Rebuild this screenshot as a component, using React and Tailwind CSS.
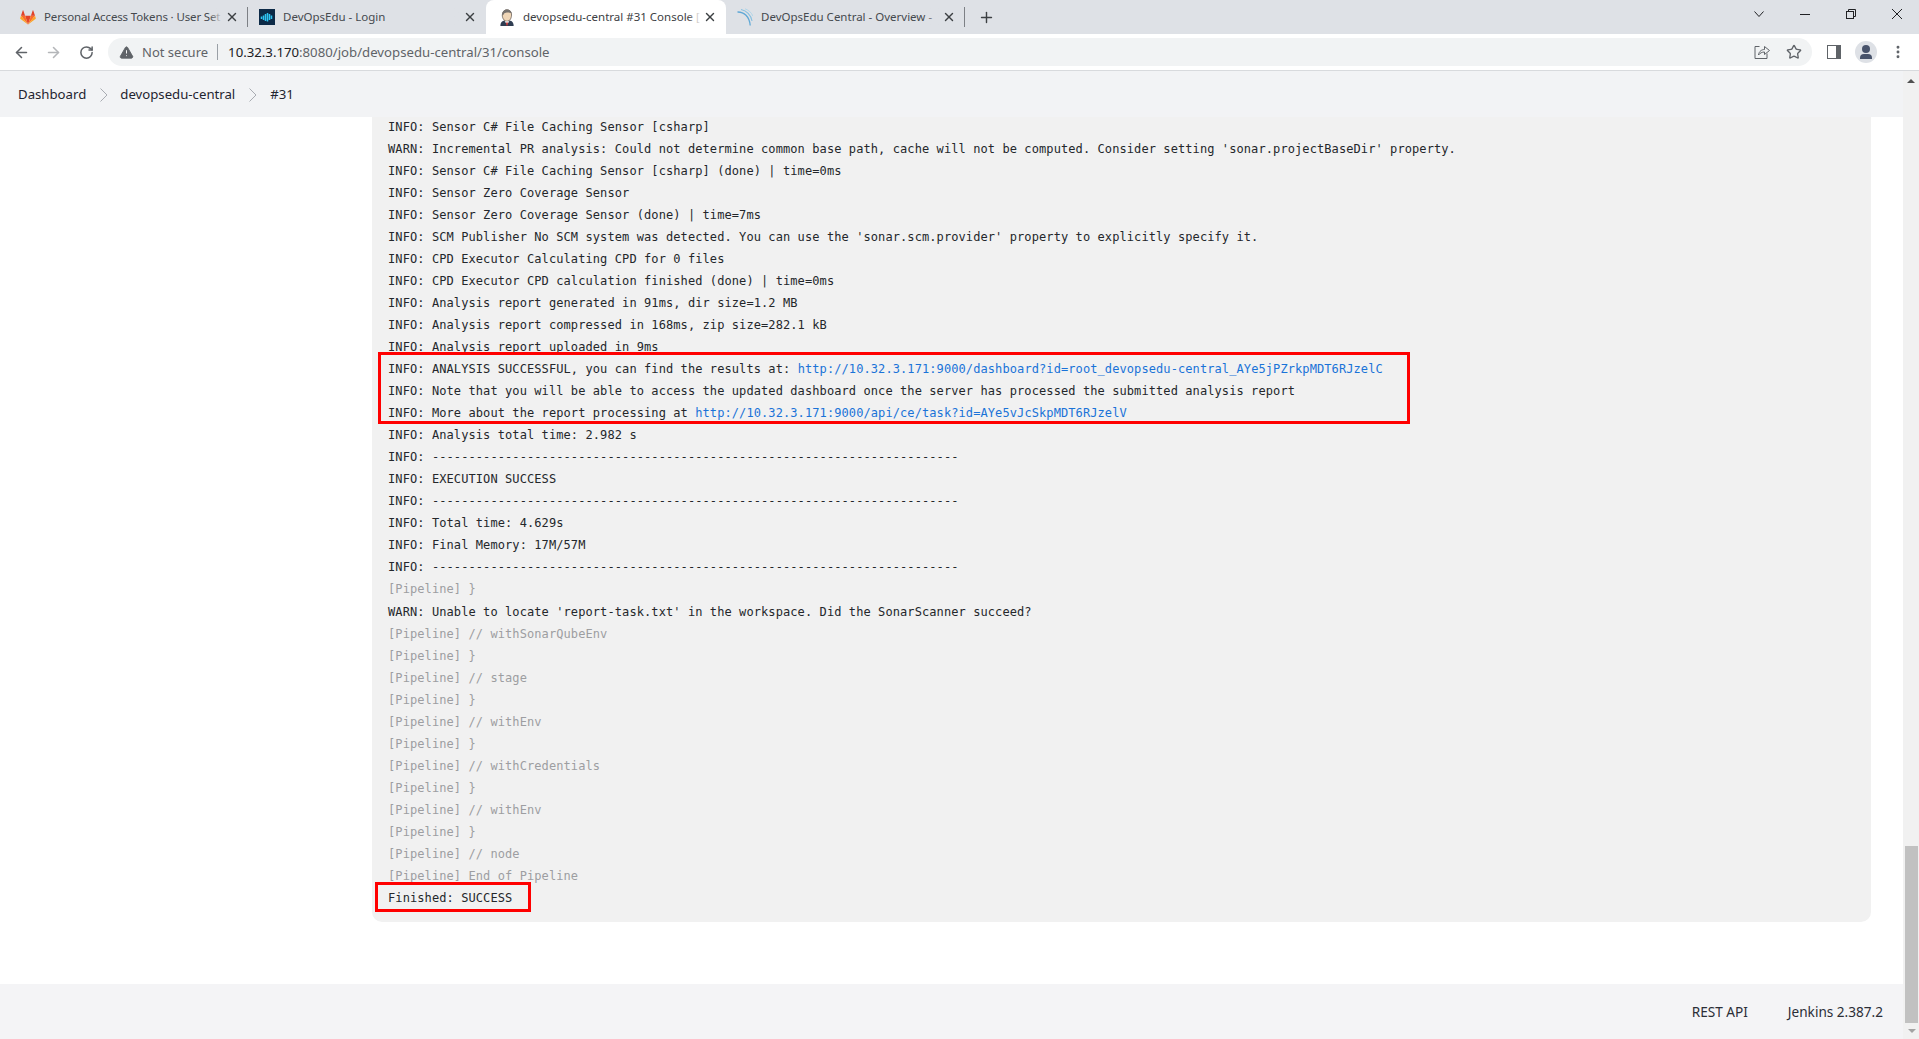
import { ArrowLeft, ArrowRight, RotateCw, X, Plus, Star, TriangleAlert, EllipsisVertical } from 'lucide-react';

const SANS = 'font-["Noto_Sans","Open_Sans",sans-serif]';

const LINES = [
  { t: 'INFO: Sensor C# File Caching Sensor [csharp]' },
  { t: "WARN: Incremental PR analysis: Could not determine common base path, cache will not be computed. Consider setting 'sonar.projectBaseDir' property." },
  { t: 'INFO: Sensor C# File Caching Sensor [csharp] (done) | time=0ms' },
  { t: 'INFO: Sensor Zero Coverage Sensor' },
  { t: 'INFO: Sensor Zero Coverage Sensor (done) | time=7ms' },
  { t: "INFO: SCM Publisher No SCM system was detected. You can use the 'sonar.scm.provider' property to explicitly specify it." },
  { t: 'INFO: CPD Executor Calculating CPD for 0 files' },
  { t: 'INFO: CPD Executor CPD calculation finished (done) | time=0ms' },
  { t: 'INFO: Analysis report generated in 91ms, dir size=1.2 MB' },
  { t: 'INFO: Analysis report compressed in 168ms, zip size=282.1 kB' },
  { t: 'INFO: Analysis report uploaded in 9ms' },
  { t: 'INFO: ANALYSIS SUCCESSFUL, you can find the results at: ', link: 'http://10.32.3.171:9000/dashboard?id=root_devopsedu-central_AYe5jPZrkpMDT6RJzelC' },
  { t: 'INFO: Note that you will be able to access the updated dashboard once the server has processed the submitted analysis report' },
  { t: 'INFO: More about the report processing at ', link: 'http://10.32.3.171:9000/api/ce/task?id=AYe5vJcSkpMDT6RJzelV' },
  { t: 'INFO: Analysis total time: 2.982 s' },
  { t: 'INFO: ------------------------------------------------------------------------' },
  { t: 'INFO: EXECUTION SUCCESS' },
  { t: 'INFO: ------------------------------------------------------------------------' },
  { t: 'INFO: Total time: 4.629s' },
  { t: 'INFO: Final Memory: 17M/57M' },
  { t: 'INFO: ------------------------------------------------------------------------' },
  { t: '[Pipeline] }', dim: true },
  { t: "WARN: Unable to locate 'report-task.txt' in the workspace. Did the SonarScanner succeed?" },
  { t: '[Pipeline] // withSonarQubeEnv', dim: true },
  { t: '[Pipeline] }', dim: true },
  { t: '[Pipeline] // stage', dim: true },
  { t: '[Pipeline] }', dim: true },
  { t: '[Pipeline] // withEnv', dim: true },
  { t: '[Pipeline] }', dim: true },
  { t: '[Pipeline] // withCredentials', dim: true },
  { t: '[Pipeline] }', dim: true },
  { t: '[Pipeline] // withEnv', dim: true },
  { t: '[Pipeline] }', dim: true },
  { t: '[Pipeline] // node', dim: true },
  { t: '[Pipeline] End of Pipeline', dim: true },
  { t: 'Finished: SUCCESS' },
];

function GitlabIcon() {
  return (
    <svg width="16" height="15" viewBox="0 0 17 16" className="shrink-0">
      <path d="M8.5 15.5 L11.6 6 H5.4 Z" fill="#e24329" />
      <path d="M8.5 15.5 L5.4 6 H1 Z" fill="#fc6d26" />
      <path d="M1 6 L0.2 8.7 C0.1 9.1 0.2 9.5 0.6 9.7 L8.5 15.5 Z" fill="#fca326" />
      <path d="M1 6 H5.4 L3.5 0.4 C3.4 0.1 3 0.1 2.9 0.4 Z" fill="#e24329" />
      <path d="M8.5 15.5 L11.6 6 H16 Z" fill="#fc6d26" />
      <path d="M16 6 L16.8 8.7 C16.9 9.1 16.8 9.5 16.4 9.7 L8.5 15.5 Z" fill="#fca326" />
      <path d="M16 6 H11.6 L13.5 0.4 C13.6 0.1 14 0.1 14.1 0.4 Z" fill="#e24329" />
    </svg>
  );
}

function WaveIcon() {
  return (
    <svg width="16" height="16" viewBox="0 0 16 16" className="shrink-0">
      <rect width="16" height="16" fill="#0c2a47" />
      <g stroke="#2fc4f2" strokeWidth="1.5">
        <path d="M2.5 7.5v2.5M4.5 6.5v4.5M6.5 5v7M8.5 4v8.5M10.5 5v6M12.5 6.5v3.5" />
      </g>
    </svg>
  );
}

function JenkinsIcon() {
  return (
    <svg width="16" height="17" viewBox="0 0 16 18" className="shrink-0">
      <path d="M1 18 C1 13.5 3.5 12 8 12 C12.5 12 15 13.5 15 18 Z" fill="#2f3d52" />
      <path d="M3 6.5 C3 2.5 5.5 0.8 8 0.8 C11 0.8 13 3 12.8 6.5 C12.6 10.5 10.6 13 8 13 C5.2 13 3 10 3 6.5 Z" fill="#f0d6b7" stroke="#49403a" strokeWidth="0.7" />
      <path d="M3 7 C2.8 2.4 5.4 0.6 8 0.6 C10.8 0.6 12.6 2 12.8 4.4 C10 3.4 6.8 3.6 5.2 4.6 C4.8 5.4 4.4 6.4 3 7 Z" fill="#77726f" />
      <path d="M5.5 13 H10.5 L9 15.2 H7 Z" fill="#fff" />
      <path d="M7 14.2 H9 L8.6 17.5 H7.4 Z" fill="#d33833" />
    </svg>
  );
}

function SonarIcon() {
  return (
    <svg width="16" height="18" viewBox="0 0 16 18" fill="none" className="shrink-0">
      <path d="M0.5 4 C7 3.8 12.5 8.5 13.2 17.5" stroke="#5fa8d6" strokeWidth="1.3" />
      <path d="M4 1.5 C9.5 2.5 14 7 15 13" stroke="#86bfe0" strokeWidth="1.1" />
      <path d="M8 0.8 C11.5 2 14.5 4.5 15.8 8" stroke="#aed4e8" strokeWidth="0.9" />
    </svg>
  );
}

function Tab({ icon, title, active, width, divider }) {
  return (
    <div className={`relative h-[34px] flex items-center pr-[9px] shrink-0 ${width} ${active ? 'bg-white rounded-t-[8px]' : ''}`}>
      {icon}
      <span className={`relative ml-[8px] flex-1 overflow-hidden whitespace-nowrap text-[11.5px] ${active ? 'text-[#3c4043]' : 'text-[#45494e]'}`}>
        {title}
        <span className={`absolute right-0 top-0 bottom-0 w-[14px] bg-gradient-to-r from-transparent ${active ? 'to-white' : 'to-[#dee1e6]'}`} />
      </span>
      <X size={14} strokeWidth={2.4} className="text-[#3c4043] shrink-0 ml-[2px]" />
      {divider && <div className="absolute right-0 top-[7px] h-[20px] w-px bg-[#7d8085]" />}
    </div>
  );
}

function ChromeBar() {
  return (
    <>
      <div className={`h-[34px] bg-[#dee1e6] flex items-start pl-[8px] ${SANS}`}>
        <Tab icon={<GitlabIcon />} title="Personal Access Tokens · User Set" width="w-[240px] pl-[12px] tracking-[-0.14px]" divider />
        <Tab icon={<WaveIcon />} title="DevOpsEdu - Login" width="w-[238px] pl-[11px]" />
        <Tab icon={<JenkinsIcon />} title="devopsedu-central #31 Console [" width="w-[240px] pl-[13px]" active />
        <Tab icon={<SonarIcon />} title="DevOpsEdu Central - Overview - " width="w-[239px] pl-[11px]" divider />
        <Plus size={17} strokeWidth={2} className="text-[#3c4043] ml-[13px] mt-[9px]" />
        <div className="flex-1" />
        <svg width="10" height="10" viewBox="0 0 10 10" fill="none" stroke="#202124" className="mt-[9px]">
          <path d="M0.5 2.5L5 7.5L9.5 2.5" />
        </svg>
        <svg width="10" height="10" viewBox="0 0 10 10" fill="none" stroke="#202124" className="ml-[36px] mt-[9px]">
          <path d="M0 5.5H10" />
        </svg>
        <svg width="10" height="10" viewBox="0 0 10 10" fill="none" stroke="#202124" className="ml-[36px] mt-[9px]">
          <rect x="0.5" y="2.5" width="7" height="7" />
          <path d="M2.5 2.5V0.5H9.5V7.5H7.5" />
        </svg>
        <svg width="10" height="10" viewBox="0 0 10 10" fill="none" stroke="#202124" className="ml-[36px] mt-[9px] mr-[17px]">
          <path d="M0 0L10 10M10 0L0 10" />
        </svg>
      </div>
      <div className={`h-[37px] bg-white border-b border-[#d8dadd] flex items-center ${SANS}`}>
        <ArrowLeft size={17} strokeWidth={2.2} className="text-[#5f6368] ml-[13px]" />
        <ArrowRight size={17} strokeWidth={2.2} className="text-[#b4b6b9] ml-[15px]" />
        <RotateCw size={15} strokeWidth={2.4} className="text-[#5f6368] ml-[17px]" />
        <div className="ml-[14px] h-[28px] w-[1704px] rounded-full bg-[#f1f3f4] flex items-center">
          <TriangleAlert size={15} fill="#5f6368" strokeWidth={1.5} className="text-[#5f6368] ml-[11px] [&>path:nth-child(n+2)]:stroke-white" />
          <span className="ml-[8px] pt-[1px] text-[13px] text-[#5f6368]">Not secure</span>
          <div className="ml-[9px] h-[16px] w-px bg-[#9aa0a6]" />
          <span className="ml-[10px] pt-[1px] text-[13.2px] text-[#5f6368]"><span className="text-[#202124]">10.32.3.170</span>:8080/job/devopsedu-central/31/console</span>
          <div className="flex-1" />
          <svg width="16" height="16" viewBox="0 0 16 16" fill="none" stroke="#5f6368" className="mr-[16px]">
            <path d="M5.5 2.5H1V14.5H13V9.5" />
            <path d="M4.5 11 C5 7 8 5.5 10.5 5.5 V2.5 L15.5 6.5 L10.5 10.5 V8 C8 8 6 9 4.5 11 Z" />
          </svg>
          <Star size={16} strokeWidth={2} className="text-[#5f6368] mr-[10px]" />
        </div>
        <div className="ml-[15px] w-[14px] h-[14px] bg-[#5f6368] flex items-center pl-[1px]"><div className="w-[8px] h-[12px] bg-white" /></div>
        <div className="ml-[14px] w-[22px] h-[22px] rounded-full bg-[#dee1e6] flex flex-col items-center justify-center overflow-hidden">
          <div className="w-[8px] h-[8px] rounded-full bg-[#48536b]" />
          <div className="w-[12px] h-[5px] rounded-t-[4px] bg-[#48536b] mt-px" />
        </div>
        <EllipsisVertical size={16} strokeWidth={2.4} className="text-[#5f6368] ml-[13px]" />
      </div>
    </>
  );
}

function Crumb() {
  return (
    <svg width="8" height="14" viewBox="0 0 8 14" fill="none" stroke="#a9acb2" className="ml-[14px] mr-[12px]">
      <path d="M0.5 0.5L7 7L0.5 13.5" />
    </svg>
  );
}

function Breadcrumb() {
  return (
    <div className={`relative z-10 h-[46px] pt-[2px] bg-[#f2f3f5] flex items-center pl-[18px] text-[13.2px] text-[#1f2430] ${SANS}`}>
      <span>Dashboard</span>
      <Crumb />
      <span>devopsedu-central</span>
      <Crumb />
      <span className="ml-[1px]">#31</span>
    </div>
  );
}

function Console() {
  return (
    <div className="relative ml-[372px] w-[1499px] -mt-[1.5px] h-[806.5px] bg-[#f1f1f1] rounded-b-[10px] pl-[16px] overflow-hidden font-['DejaVu_Sans_Mono',monospace] text-[12px] leading-[22.04px] text-[#24272b]">
      {LINES.map((l, i) => (
        <div key={i} className={`whitespace-pre tracking-[0.09px] ${l.dim ? 'text-[#9d9ea1]' : ''}`}>
          {l.t}{l.link && <span className="text-[#1a73d8]">{l.link}</span>}
        </div>
      ))}
      {/* annotations on top of the log */}
      <div className="absolute left-[6px] top-[236.5px] w-[1032px] h-[72px] border-[3px] border-[#ff0000]" />
      <div className="absolute left-[3px] top-[766.5px] w-[156px] h-[30px] border-[3px] border-[#ff0000]" />
    </div>
  );
}

function Footer() {
  return (
    <div className={`h-[55px] pt-[2px] bg-[#f4f4f6] flex items-center justify-end pr-[20px] text-[13.6px] text-[#2b2e36] ${SANS}`}>
      <span>REST API</span>
      <span className="ml-[40px]">Jenkins 2.387.2</span>
    </div>
  );
}

function Scrollbar() {
  return (
    <div className="w-[16px] bg-[#f1f1f1] flex flex-col items-center relative">
      <div className="mt-[8px] w-0 h-0 border-x-[4px] border-x-transparent border-b-[4px] border-b-[#505050]" />
      <div className="absolute left-[2px] top-[775px] w-[13px] h-[177px] bg-[#c1c1c1]" />
      <div className="absolute left-[5px] bottom-[6px] w-0 h-0 border-x-[4px] border-x-transparent border-t-[4px] border-t-[#a3a3a3]" />
    </div>
  );
}

export default function App() {
  return (
    <div className="w-[1919px] h-[1039px] overflow-hidden bg-white flex flex-col">
      <ChromeBar />
      <div className="flex-1 flex min-h-0">
        <div className="flex-1 flex flex-col min-w-0">
          <Breadcrumb />
          <Console />
          <div className="flex-1" />
          <Footer />
        </div>
        <Scrollbar />
      </div>
    </div>
  );
}
